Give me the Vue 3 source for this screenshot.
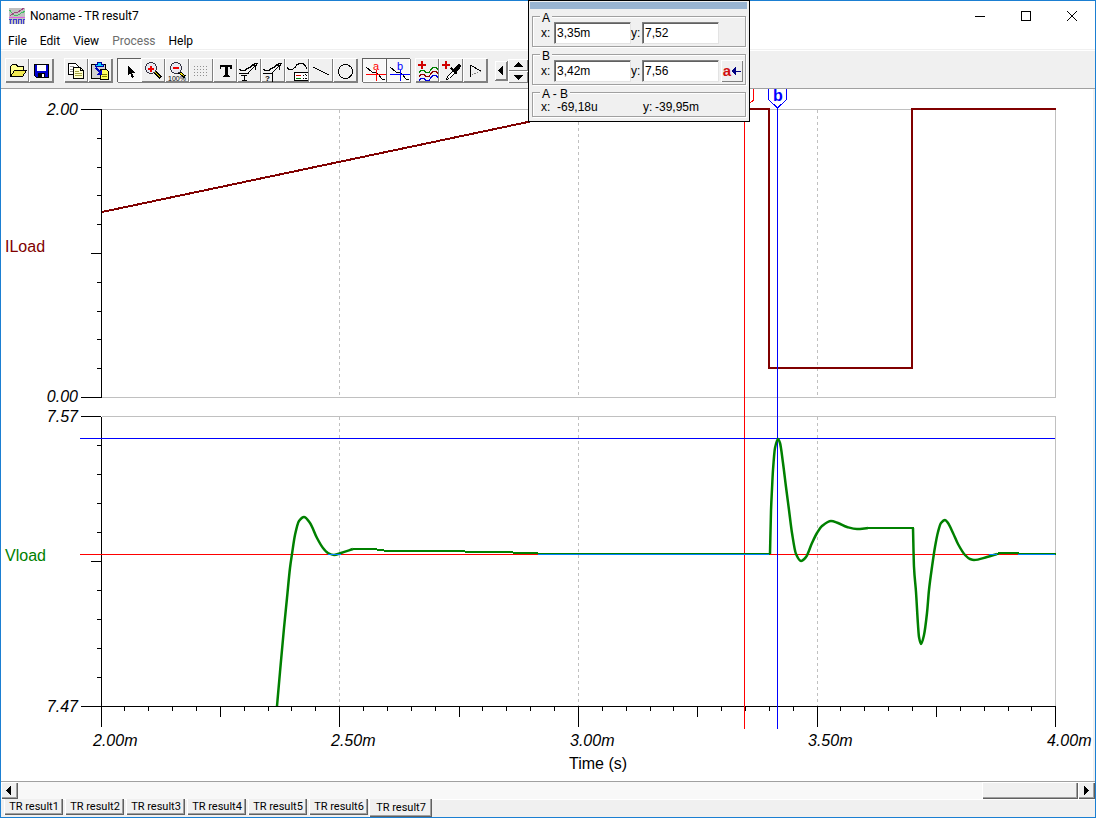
<script setup>
import { ref } from 'vue'

const menus = ['File', 'Edit', 'View', 'Process', 'Help']
const tabs = [1, 2, 3, 4, 5, 6, 7].map((n) => `TR result${n}`)
const active = ref('TR result7')

const ax = ref('3,35m')
const ay = ref('7,52')
const bx = ref('3,42m')
const by = ref('7,56')

const plus = { d: 'M3 6h8v2H3zM6 3h2v8H6z', f: '#d00000' }
const annotCurve = { d: 'M2 11.500h1l1 1h4l2-2 3-1 3-3 3-1h2', s: '#000' }
const annotArrow = { d: 'M10 16L19 7', s: '#000' }
const annotHead = { d: 'M15 8l5-2-1 5-1 1v-3z', f: '#000' }

const groups = [
  [
    {
      label: 'Open',
      parts: [
        { d: 'M5.500 18.500V8.500l2-2h4l1 2h6v4', s: '#000', f: '#ffff90' },
        { d: 'M5.500 18.500l4-6h12l-4 6z', s: '#000', f: '#f0e850' },
      ],
    },
    {
      label: 'Save',
      parts: [
        { d: 'M5.500 6.500h14v13h-12l-2-2z', s: '#000', f: '#0000d0' },
        { d: 'M8 7h9v6H8z', f: '#fff' },
        { d: 'M9 15h7v4H9z', f: '#000' },
        { d: 'M13 16h2v3h-2z', f: '#fff' },
      ],
    },
  ],
  [
    {
      label: 'Copy',
      parts: [
        { d: 'M4.500 5.500h7l3 3v8h-10z', s: '#000', f: '#fff' },
        { d: 'M6 8.500h4M6 11.500h4M6 13.500h3', s: '#909090' },
        { d: 'M9.500 9.500h7l3 3v8h-10z', s: '#000', f: '#ffffd0' },
        { d: 'M16.500 9.500v3h3', s: '#000' },
        { d: 'M11 13.500h4M11 15.500h7M11 17.500h7', s: '#a0a040' },
      ],
    },
    {
      label: 'Paste',
      parts: [
        { d: 'M3.500 6.500h14v14h-14z', s: '#000', f: '#d0d0d0' },
        { d: 'M7 8V6h2V4h4v2h2v2z', f: '#00d0ff', s: '#0000a0' },
        { d: 'M12.500 11.500h6l2 2v8h-8z', s: '#000', f: '#ffff60' },
        { d: 'M14 16.500h5M14 18.500h5', s: '#808000' },
        { d: 'M8 10l5 5', s: '#0000c0', w: 2 },
        { d: 'M14 11v6h-6z', f: '#0000c0' },
      ],
    },
  ],
  [
    {
      label: 'Select',
      pressed: true,
      parts: [{ d: 'M11 8v9l2-2 2 5 2-1-2-4h3z', f: '#000' }],
    },
    {
      label: 'Zoom in',
      parts: [
        { d: 'M14 14l6 6', s: '#000', w: 3 },
        { d: 'M14 14l5 5', s: '#f0e000' },
        { d: 'M4.500 10a5.500 5.500 0 1 0 11 0a5.500 5.500 0 1 0 -11 0', s: '#303040', f: '#e8e8f0' },
        { d: 'M7 10.500h6M10 8v6', s: '#f00000', w: 2 },
      ],
    },
    {
      label: 'Zoom to 100%',
      parts: [
        { d: 'M14 14l6 5', s: '#000', w: 3 },
        { d: 'M14 14l5 4', s: '#f0e000' },
        { d: 'M5.500 10a5.500 5.500 0 1 0 11 0a5.500 5.500 0 1 0 -11 0', s: '#303040', f: '#e8e8f0' },
        { d: 'M8 10h6', s: '#f00000', w: 2 },
        { t: '100%', x: 3, y: 23, size: 7, fill: '#000' },
      ],
    },
    {
      label: 'Grid',
      parts: [8, 11, 14, 17].map((y) => ({ d: `M5 ${y}.500h1m2 0h1m2 0h1m2 0h1m2 0h1`, s: '#909090' })),
    },
    {
      label: 'Text',
      parts: [
        { d: 'M6.500 7h12v4h-1l-1-2h-2v8l2 1v1h-7v-1l2-1v-8h-3l-1 2h-1z', f: '#000' },
      ],
    },
    {
      label: 'Text with pointer',
      parts: [
        annotCurve,
        annotArrow,
        annotHead,
        { d: 'M2 15.500h10M4 17.500h6M7 17v5M5 22.500h5', s: '#000' },
      ],
    },
    {
      label: 'Label',
      parts: [
        annotCurve,
        annotArrow,
        annotHead,
        { d: 'M2 15.500h9v8', s: '#000' },
        { t: '?', x: 4, y: 23, size: 8, fill: '#000', bold: true },
      ],
    },
    {
      label: 'Legend',
      parts: [
        { d: 'M2 9.500l2 2h3l3-2 2-3 3-1h3l2 2 2 3', s: '#000' },
        { d: 'M23 14.500H9.500v8H23', s: '#000', f: '#fff' },
        { d: 'M11 17.500h5', s: '#d00000' },
        { d: 'M11 20.500h5', s: '#008000' },
        { d: 'M18 17.500h1m2 0h1M18 20.500h1m2 0h1M20 16v1m0 3v1', s: '#000' },
      ],
    },
    { label: 'Line', parts: [{ d: 'M4 9l16 8', s: '#000' }] },
    {
      label: 'Ellipse',
      parts: [{ d: 'M5.500 13.500a7 7 0 1 0 14 0a7 7 0 1 0 -14 0', s: '#000' }],
    },
  ],
  [
    {
      label: 'Cursor A',
      pressed: true,
      parts: [
        { d: 'M4 9l6 5h2l4 2 4 5h3', s: '#000' },
        { d: 'M4 16.500h20M14.500 12v11', s: '#f00' },
        { t: 'a', x: 11, y: 12, size: 11, fill: '#f00' },
      ],
    },
    {
      label: 'Cursor B',
      pressed: true,
      parts: [
        { d: 'M4 9l6 5h2l4 2 4 5h3', s: '#000' },
        { d: 'M4 16.500h20M14.500 12v11', s: '#00f' },
        { t: 'b', x: 11, y: 12, size: 11, fill: '#00f' },
      ],
    },
  ],
  [
    {
      label: 'Add curves',
      parts: [
        plus,
        { d: 'M4 14.500l2-2h3l2 2h3l2-3 2-2h3l2 2', s: '#008000' },
        { d: 'M4 18.500l2-2h3l2 2h3l2-3 2-2h3l2 2', s: '#900000' },
        { d: 'M4 22.500l2-2h3l2 2h3l2-3 2-2h3l2 2', s: '#0000e0' },
      ],
    },
    {
      label: 'Add probe',
      parts: [
        plus,
        { d: 'M7.500 21.500l1-3 6-6 2 2-6 6z', s: '#000', f: '#fff' },
        { d: 'M12 10l6 6', s: '#000', w: 2 },
        { d: 'M14 12l4-5 2-1 2 2-1 3-4 3z', f: '#000' },
      ],
    },
    {
      label: 'Post processing',
      parts: [
        { d: 'M7.500 7v12M7 7l11 6', s: '#000' },
        { d: 'M18 13l-10 4', s: '#808080', dash: '1 2' },
      ],
    },
  ],
]

const range = (n, f) => Array.from({ length: n }, (_, i) => f(i))
const timeLabels = ['2.00m', '2.50m', '3.00m', '3.50m', '4.00m']
const xTicks = range(41, (i) => ({
  x: 101.5 + Math.floor(i * 23.87),
  len: i % 10 === 0 ? 20 : i % 5 === 0 ? 10 : 4,
}))
const yTicks = [109, 416].flatMap((top, p) =>
  range(11, (i) => ({
    y: top + 0.5 + Math.round(i * (p ? 29 : 28.8)),
    len: i % 10 === 0 ? 20 : i === 5 ? 10 : 4,
  })),
)
const gridX = [339.5, 578.5, 817.5]

// Smooth curve through the samples of one stretch between load steps.
function spline(samples) {
  const p = samples.trim().split(/\s+/).map((s) => s.split(',').map(Number))
  let d = `M${p[0]}`
  for (let i = 0; i < p.length - 1; i++) {
    const a = p[i - 1] || p[i]
    const b = p[i]
    const c = p[i + 1]
    const e = p[i + 2] || c
    const k = (c[0] - b[0]) / 3
    const m1 = slope(a, b, c)
    const m2 = slope(b, c, e)
    d += `C${b[0] + k},${b[1] + k * m1} ${c[0] - k},${c[1] - k * m2} ${c}`
  }
  return d
}
function slope(a, b, c) {
  const s1 = b[0] === a[0] ? null : (b[1] - a[1]) / (b[0] - a[0])
  const s2 = c[0] === b[0] ? null : (c[1] - b[1]) / (c[0] - b[0])
  if (s1 === null) return s2
  if (s2 === null) return s1
  return s1 * s2 <= 0 ? 0 : (2 * s1 * s2) / (s1 + s2)
}

const transients = [
  '277,706 280,672 284,628 287,598 290,568 292,554 295,535 299,521 304,517 310,523 317,538 323,548 328,553 334,555 341,553 353,549',
  '770,554 771,511 772,489 773,470 775,448 778,439 780,443 783,463 786,487 789,510 792,533 796,554 801,561 806,557 812,543 817,533 822,526 831,521 838,523 847,527 857,529 868,528',
  '913,528 914,567 916,592 918,625 919,637 921,644 924,635 927,613 929,590 932,567 935,547 938,532 941,523 945,520 948,523 953,533 958,544 965,555 970,559 974,560 987,557 997,554',
].map(spline)
const settled = [
  '353,549 373,549 388,551 440,551 490,552 536,553 540,554 770,554',
  '868,528 913,528 913,530',
  '997,554 1000,553 1017,553 1020,554 1056,554',
]
const current = '102,212 528,122 580,109 769,109 769,368 912,368 912,109 1056,109'
</script>

<template>
  <div class="window">
    <header class="titlebar">
      <svg class="appicon" viewBox="0 0 16 16" aria-hidden="true">
        <path d="M0 0h16v16H0z" fill="#c0c0c0" />
        <path d="M0 9.500h16" stroke="#e060e0" />
        <path d="M0 2c2 0 3 5 5 5s4 1 6-1 3-1 5-3" fill="none" stroke="#40c060" />
        <path d="M1 8l4-3 4-1 6-4" fill="none" stroke="#a04080" />
        <path d="M0 11.500h3M1.500 12v4M4.500 16v-4.500h3V16M9.500 16v-4.500h3V16M14.500 16v-4.500h2" fill="none" stroke="#4040d0" />
      </svg>
      <h1>Noname - TR result7</h1>
      <div class="controls">
        <button aria-label="Minimize"><svg viewBox="0 0 12 12"><path d="M1 6.500h10" /></svg></button>
        <button aria-label="Maximize"><svg viewBox="0 0 12 12"><path d="M1.500 1.500h9v9h-9z" /></svg></button>
        <button aria-label="Close"><svg class="smooth" viewBox="0 0 12 12"><path d="M1 1l10 10M11 1L1 11" /></svg></button>
      </div>
    </header>

    <nav class="menubar">
      <button v-for="m in menus" :key="m" :disabled="m === 'Process'">{{ m }}</button>
    </nav>

    <div class="toolbar">
      <div v-for="(g, gi) in groups" :key="gi" class="group">
        <button v-for="b in g" :key="b.label" class="tool" :class="{ pressed: b.pressed }" :aria-label="b.label">
          <svg viewBox="0 0 24 24">
            <template v-for="(p, i) in b.parts" :key="i">
              <text v-if="p.t" :x="p.x" :y="p.y" :font-size="p.size" :fill="p.fill" :font-weight="p.bold ? 700 : 400">{{ p.t }}</text>
              <path v-else :d="p.d" :fill="p.f || 'none'" :stroke="p.s || 'none'" :stroke-width="p.w || 1" :stroke-dasharray="p.dash" />
            </template>
          </svg>
        </button>
      </div>
      <div class="spin">
        <button class="raised narrow" aria-label="Previous"><svg viewBox="0 0 14 20"><path d="M4 10l5-5v10z" /></svg></button>
        <div class="stack">
          <button class="raised" aria-label="Up"><svg viewBox="0 0 20 12"><path d="M5 8l5-5 5 5z" /></svg></button>
          <button class="raised" aria-label="Down"><svg viewBox="0 0 20 12"><path d="M5 4h10l-5 5z" /></svg></button>
        </div>
      </div>
    </div>

    <main class="chart">
      <svg viewBox="1 89 1092 692" role="img" aria-label="ILoad and Vload over time">
        <g class="lines">
          <g stroke="#c0c0c0">
            <path d="M102 109.500H1055.500V397.500H102M102 416.500H1055.500V706" />
            <path v-for="x in gridX" :key="x" :d="`M${x} 110V397M${x} 417V706`" stroke-dasharray="3 3" />
          </g>
          <g stroke="#000">
            <path d="M101.500 109V398M101.500 417V707M81 706.500H1056" />
            <path v-for="t in yTicks" :key="t.y" :d="`M101 ${t.y}h${-t.len}`" />
            <path v-for="t in xTicks" :key="t.x" :d="`M${t.x} 707v${t.len}`" />
          </g>
          <polyline :points="current" stroke="#800000" stroke-width="2" />
          <path d="M80 554.500H1055M744.500 108V729" stroke="#f00" />
          <path d="M80 438.500H1055M777.500 108V729" stroke="#00f" />
          <path v-for="d in transients" :key="d" :d="d" class="trace transient" />
          <polyline v-for="s in settled" :key="s" :points="s" class="trace" />
          <path d="M328 554.500H341M538 554.500H769M989 554.500H997M1018 554.500H1055" stroke="#0080ff" />
          <path d="M753.500 89V100L744.500 108" stroke="#f00" />
          <path d="M768.500 89V99.500L777.500 108L786.500 99.500V89" stroke="#00f" />
        </g>
        <text x="773" y="101" class="marker">b</text>
        <g class="scale">
          <text x="78" y="115">2.00</text>
          <text x="78" y="402">0.00</text>
          <text x="78" y="422">7.57</text>
          <text x="78" y="712">7.47</text>
        </g>
        <text v-for="(l, i) in timeLabels" :key="l" :x="93 + Math.floor(i * 238.5)" y="746" class="time">{{ l }}</text>
        <text x="569" y="769">Time (s)</text>
        <text x="5" y="252" fill="#800000">ILoad</text>
        <text x="5" y="561" fill="#008000">Vload</text>
      </svg>
    </main>

    <div class="scrollbar">
      <button class="raised" aria-label="Scroll left"><svg viewBox="0 0 16 16"><path d="M5 8l4-4v8z" /></svg></button>
      <div class="track"><div class="thumb"></div></div>
      <button class="raised" aria-label="Scroll right"><svg viewBox="0 0 16 16"><path d="M10 8L6 4v8z" /></svg></button>
    </div>

    <footer class="tabs">
      <button v-for="t in tabs" :key="t" :class="{ active: t === active }" @click="active = t">{{ t }}</button>
    </footer>

    <section class="popup" aria-label="Cursor values">
      <div class="grip"></div>
      <fieldset>
        <legend>A</legend>
        <label for="ax">x:</label><input id="ax" v-model="ax" />
        <label for="ay">y:</label><input id="ay" v-model="ay" />
      </fieldset>
      <fieldset>
        <legend>B</legend>
        <label for="bx">x:</label><input id="bx" v-model="bx" />
        <label for="by">y:</label><input id="by" v-model="by" />
        <button class="raised swap" aria-label="Move A to B">
          <span>a</span>
          <svg viewBox="0 0 10 8"><path d="M2 4h8M4 1L1 4l3 3z" /></svg>
        </button>
      </fieldset>
      <fieldset class="diff">
        <legend>A - B</legend>
        <span class="name">x:</span><output class="wide">-69,18u</output>
        <span class="name near">y:</span><output>-39,95m</output>
      </fieldset>
    </section>
  </div>
</template>

<style>
body {
  background: #fff;
}
</style>

<style scoped>
.window {
  box-sizing: border-box;
  position: relative;
  display: flex;
  flex-direction: column;
  height: 100vh;
  border: 1px solid #1b7fd2;
  background: #fff;
  color: #000;
  font-family: "Liberation Sans", Arial, sans-serif;
}
button {
  padding: 0;
  border: 0;
  background: none;
  color: inherit;
  font: inherit;
}
svg {
  display: block;
}
.titlebar {
  display: flex;
  align-items: center;
  height: 29px;
  padding-left: 8px;
}
.appicon {
  width: 16px;
  height: 16px;
  margin-right: 5px;
  shape-rendering: crispEdges;
}
h1 {
  flex: 1;
  margin: 0;
  font: 400 12px/16px Roboto, "Open Sans", sans-serif;
}
.controls {
  display: flex;
}
.controls button {
  display: grid;
  place-items: center;
  width: 46px;
  height: 29px;
}
.controls svg {
  width: 12px;
  height: 12px;
  fill: none;
  stroke: #000;
  shape-rendering: crispEdges;
}
.controls .smooth {
  shape-rendering: auto;
}
.menubar {
  display: flex;
  gap: 13px;
  height: 19px;
  padding: 0 7px;
  font: 12px/22px Roboto, "Open Sans", sans-serif;
}
.menubar button:disabled {
  color: #6d6d6d;
}
.toolbar {
  box-sizing: border-box;
  display: flex;
  gap: 5px;
  height: 40px;
  padding: 8px 4px 0;
  border-top: 1px solid #f0f0f0;
  border-bottom: 1px solid #a0a0a0;
  background: #f0f0f0;
  box-shadow: inset 0 1px #fff;
}
.group {
  display: flex;
  height: 24px;
  box-shadow: 1px 1px #808080;
}
.group:first-child {
  margin-right: 6px;
}
.tool,
.raised {
  background: #f0f0f0;
  box-shadow: inset 1px 1px #fff, inset -1px -1px #808080;
}
.tool {
  width: 24px;
  height: 24px;
}
.tool.pressed {
  background: #f8f8f8;
  box-shadow: inset 1px 1px #606060, inset -1px -1px #fff;
}
.tool svg {
  width: 24px;
  height: 24px;
  shape-rendering: crispEdges;
}
.raised svg {
  width: 100%;
  height: 100%;
  fill: #000;
  shape-rendering: crispEdges;
}
.spin {
  display: flex;
  margin-left: 3px;
}
.narrow {
  width: 13px;
  height: 20px;
  margin-top: 3px;
  border-right: 1px solid #808080;
  border-bottom: 1px solid #808080;
}
.stack {
  display: flex;
  flex-direction: column;
  padding-top: 1px;
}
.stack .raised {
  width: 20px;
  height: 12px;
}
.chart {
  flex: 1;
  min-height: 0;
  border-right: 2px solid #f0f0f0;
}
.chart svg {
  width: 100%;
  height: 100%;
  overflow: visible;
  font-size: 16px;
}
.lines {
  fill: none;
  shape-rendering: crispEdges;
}
.trace {
  stroke: #008000;
  stroke-width: 2;
}
.transient {
  stroke-width: 2.5;
  shape-rendering: auto;
}
.scale {
  font-style: italic;
  text-anchor: end;
}
.time {
  font-style: italic;
}
.marker {
  fill: #00f;
  font-weight: 700;
}
.scrollbar {
  display: flex;
  height: 17px;
  border-top: 1px solid #a0a0a0;
}
.scrollbar .raised {
  width: 17px;
  height: 17px;
  box-shadow: inset 1px 1px #fff, inset -1px -1px #606060, inset -2px -2px #a0a0a0;
}
.track {
  flex: 1;
  display: flex;
  justify-content: flex-end;
  background: #f8f8f8;
}
.thumb {
  width: 96px;
  background: #f0f0f0;
  box-shadow: inset 1px 1px #fff, inset -1px -1px #606060, inset -2px -2px #a0a0a0;
}
.tabs {
  display: flex;
  gap: 2px;
  height: 18px;
  padding-left: 3px;
  background: #f0f0f0;
  box-shadow: inset 0 1px #fff;
}
.tabs button {
  width: 59px;
  height: 16px;
  border-left: 1px solid #fff;
  background: #f0f0f0;
  box-shadow: inset -1px -1px #606060, inset -2px -2px #a0a0a0;
  font: 11px/14px Roboto, "Liberation Sans", sans-serif;
  white-space: nowrap;
}
.tabs .active {
  width: 63px;
  height: 18px;
  margin-left: -1px;
  line-height: 18px;
}
.popup {
  box-sizing: border-box;
  position: absolute;
  top: -1px;
  left: 527px;
  width: 222px;
  height: 122px;
  padding: 1px 2px 0 1px;
  border: 1px solid #000;
  background: #f0f0f0;
  font-size: 12px;
}
.grip {
  height: 7px;
  background: #99b4d1;
}
fieldset {
  position: relative;
  box-sizing: border-box;
  display: flex;
  align-items: center;
  min-width: 0;
  height: 31px;
  margin: 7px 1px 0 2px;
  padding: 2px 0 0 8px;
  border: 1px solid #a0a0a0;
  box-shadow: inset 1px 1px #fff, 1px 1px #fff;
}
legend {
  position: absolute;
  top: -5px;
  left: 7px;
  padding: 0 2px;
  background: #f0f0f0;
  line-height: 12px;
}
label {
  width: 13px;
}
input + label {
  width: 11px;
}
input {
  box-sizing: border-box;
  width: 77px;
  height: 22px;
  padding: 0 2px;
  border: 1px solid;
  border-color: #808080 #e3e3e3 #e3e3e3 #808080;
  box-shadow: inset 1px 1px #606060;
  background: #fff;
  font: 12px "Liberation Sans", Arial, sans-serif;
}
fieldset .swap {
  display: flex;
  align-items: center;
  justify-content: center;
  width: 22px;
  height: 22px;
  margin-left: 2px;
}
.swap span {
  color: #d01010;
  font: 700 15px/20px "Liberation Sans", Arial, sans-serif;
}
.swap svg {
  width: 10px;
  height: 8px;
  fill: #000080;
  stroke: #000080;
}
fieldset.diff {
  height: 25px;
  padding-top: 4px;
}
.name {
  width: 16px;
}
.near {
  width: 12px;
}
.wide {
  width: 86px;
}
</style>
